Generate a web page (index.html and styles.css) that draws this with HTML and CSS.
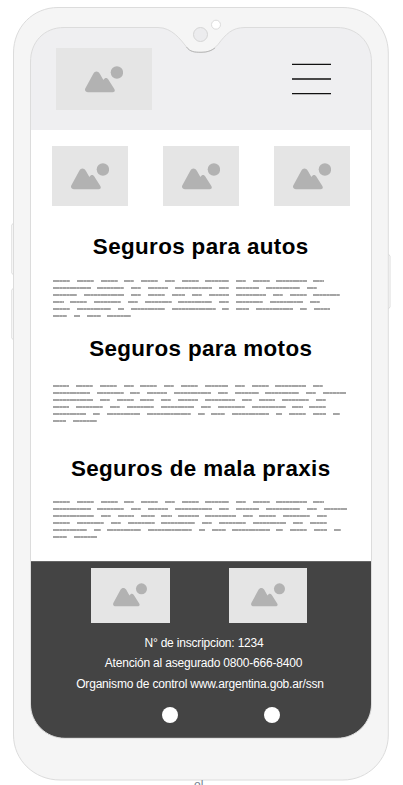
FILE: index.html
```html
<!DOCTYPE html>
<html lang="es">
<head>
<meta charset="utf-8">
<title>Seguros</title>
<link rel="stylesheet" href="styles.css">
</head>
<body>
<svg class="defs" width="0" height="0" aria-hidden="true">
  <symbol id="picture" viewBox="0 0 38 27">
    <circle cx="31.9" cy="6.5" r="6.2"/>
    <path d="M.4 22.2 8.3 7.7C10 4.8 13 4.8 14.8 7.7L18.4 14C20 11.5 22 11.5 23.3 13.6L29.2 22.8C30.6 25 29.4 26.2 27.7 26.2H3C.4 26.2-.7 24.3.4 22.2Z"/>
  </symbol>
</svg>
<div class="phone">
  <div class="screen">
    <header class="header">
      <div class="picture logo"><svg class="icon"><use href="#picture"/></svg></div>
      <svg class="menu" viewBox="0 0 39 34"><path d="M0 1.300H39M0 16H39M0 30.700H39"/></svg>
    </header>
    <main class="main">
      <div class="thumbs">
        <div class="picture"><svg class="icon"><use href="#picture"/></svg></div>
        <div class="picture"><svg class="icon"><use href="#picture"/></svg></div>
        <div class="picture"><svg class="icon"><use href="#picture"/></svg></div>
      </div>
      <section class="autos">
        <h2>Seguros para autos</h2>
        <div class="copy" data-lines="5 5 5 3 5 3 5 7 3 5 9 3|11 8 3 6 11 3 7 10 3|7 12 3 5 4 3 6 9 3 5 8|3 5 8 3 8 10 3 8 10 3|5 10 2 10 13 2 4 11 2 5|4 2 4 7"></div>
      </section>
      <section class="motos">
        <h2>Seguros para motos</h2>
        <div class="copy" data-lines="5 5 5 3 5 3 5 7 3 5 9 3|11 8 3 6 11 3 7 10 3 7|12 3 5 4 3 6 9 3 5 8 3|5 8 3 8 10 3 8 10 3 5|10 2 10 13 2 4 11 2 5 4 2|4 7"></div>
      </section>
      <section class="praxis">
        <h2>Seguros de mala praxis</h2>
        <div class="copy" data-lines="5 5 5 3 5 3 5 7 3 5 9 3|11 8 3 6 11 3 7 10 3 7|12 3 5 4 3 6 9 3 5 8 3|5 8 3 8 10 3 8 10 3 5|10 2 10 13 2 4 11 2 5 4 2|4 7"></div>
      </section>
    </main>
    <footer class="footer">
      <div class="partners">
        <div class="picture"><svg class="icon"><use href="#picture"/></svg></div>
        <div class="picture"><svg class="icon"><use href="#picture"/></svg></div>
      </div>
      <p class="license">N° de inscripcion: 1234</p>
      <p class="contact">Atención al asegurado 0800-666-8400</p>
      <p class="control">Organismo de control www.argentina.gob.ar/ssn</p>
      <div class="dots"><span></span><span></span></div>
    </footer>
  </div>
  <svg class="frame" width="403" height="785" viewBox="0 0 403 785" aria-hidden="true">
    <path class="shell" fill-rule="evenodd" d="M58 7.5H343C368 7.5 388.3 27 388.3 53V735C388.3 760 368 780 343 780H60C34 780 13.5 760 13.5 735V53C13.5 27 33 7.5 58 7.5ZM30.5 62V704C30.5 723 46 738.3 65 738.3H337C356 738.3 371.5 723 371.5 704V62C371.5 42 357 27.5 337 27.5H245C232 27.5 226 34 218 44.5C213 50.5 208 52.3 201 52.3C195 52.3 190 52 186.5 47C181 40 172 27.5 158 27.5H64C44 27.5 30.5 42 30.5 62Z"/>
    <path class="edge" d="M186.5 47C190 52 195 52.3 201 52.3C207 52.3 211 51 215 48"/>
    <path class="button" d="M13.5 223L11.8 225V273L13.5 275M13.5 288L11.8 290V338L13.5 340M388.3 254L390 256V307L388.3 309"/>
    <circle class="camera" cx="200.5" cy="34.5" r="7"/>
    <circle class="sensor" cx="216" cy="24.7" r="4.5"/>
  </svg>
</div>
<div class="caption">ol</div>
<script src="copy.js"></script>
</body>
</html>
```
FILE: styles.css
```css
* { box-sizing: border-box; }
body {
  margin: 0;
  width: 403px;
  height: 785px;
  overflow: hidden;
  position: relative;
  background: #fff;
  font-family: "Liberation Sans", Arial, sans-serif;
}
.defs { position: absolute; }
.phone { height: 785px; padding: 28px 32px 0 31px; }
.frame { position: absolute; left: 0; top: 0; pointer-events: none; }
.shell { fill: #f5f5f5; stroke: #dcdcdc; }
.edge { fill: none; stroke: #b9b9b9; }
.button { fill: none; stroke: #dcdcdc; }
.camera { fill: #ececee; stroke: #d5d5d5; }
.sensor { fill: #fff; stroke: #dcdcdc; }
.screen { width: 340px; height: 710px; display: flex; flex-direction: column; }
.header {
  height: 102px;
  padding: 20.4px 40px 0 24.8px;
  display: flex;
  justify-content: space-between;
  background: #efeff1;
}
.picture {
  display: flex;
  align-items: center;
  justify-content: center;
  background: #e5e5e5;
  width: 76px;
  height: 60px;
}
.icon { width: 38px; height: 27px; fill: #b2b2b2; }
.logo { width: 96.5px; height: 62px; }
.menu { width: 39px; height: 34px; margin-top: 14.6px; fill: none; stroke: #111; stroke-width: 1.3; }
.main { flex: 1; }
.thumbs { display: flex; justify-content: space-between; padding: 16px 21px 0; }
h2 {
  margin: 0;
  height: 25px;
  line-height: 26px;
  font-size: 22.4px;
  letter-spacing: .37px;
  text-align: center;
  text-indent: -.6px;
  white-space: nowrap;
  overflow: hidden;
  color: #000;
}
.autos { padding-top: 28px; }
.autos .copy { margin: 21px 0 0 22.4px; }
.motos { padding-top: 19px; }
.motos .copy { margin: 24px 0 0 21.6px; }
.praxis { padding-top: 34px; }
.praxis .copy { margin: 20px 0 0 22.4px; }
.copy { display: flex; flex-direction: column; gap: 5px; }
.line { display: flex; gap: 6.76px; height: 2px; }
.word {
  flex: none;
  width: calc(var(--letters) * 3.38px);
  background: repeating-linear-gradient(90deg, #a4a4a4 0 2.7px, #b8b8b8 2.7px 3.38px);
}
.footer { height: 177px; background: #444; color: #fff; border-top: 1px solid #666; }
.partners { display: flex; gap: 59px; padding: 5.6px 0 0 60.2px; }
.partners .picture { width: 78.4px; height: 55.4px; }
.partners .icon { width: 34px; height: 24px; }
.footer p {
  margin: 0;
  height: 20px;
  line-height: 20px;
  font-size: 12px;
  letter-spacing: -.19px;
  text-align: center;
  white-space: nowrap;
}
.footer .license { margin-top: 10px; padding-left: 6px; }
.footer .contact { padding-left: 5px; }
.footer .control { padding-right: 2px; margin-top: 1px; }
.dots { display: flex; gap: 86.6px; padding: 13px 0 0 130.6px; }
.dots span { width: 16px; height: 16px; border-radius: 50%; background: #fff; }
.caption { position: absolute; left: 194px; top: 778px; font-size: 12px; line-height: 14px; color: #75828f; }
```
FILE: copy.js
```js
// Expands each list of word lengths into rows of placeholder words.
document.querySelectorAll('.copy').forEach((copy) => {
  copy.dataset.lines.split('|').forEach((lengths) => {
    const line = document.createElement('div');
    line.className = 'line';
    lengths.split(' ').forEach((letters) => {
      const word = document.createElement('span');
      word.className = 'word';
      word.style.setProperty('--letters', letters);
      line.append(word);
    });
    copy.append(line);
  });
});
```
